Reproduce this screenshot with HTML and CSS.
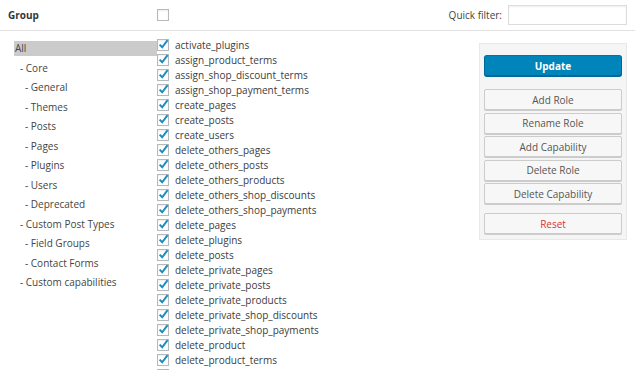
FILE: index.html
```html
<!DOCTYPE html>
<html lang="en">
  <head>
    <meta charset="UTF-8" />
    <meta name="viewport" content="width=device-width, initial-scale=1.0" />
    <title>Capabilities</title>
    <link rel="stylesheet" href="styles.css">
  </head>
  <body>
    <div class="header">
      <div class="group-title">Group</div>
      <span class="cb"></span>
      <div class="filter">
        <label for="quickFilter">Quick filter:</label>
        <input type="text" id="quickFilter" />
      </div>
    </div>
    <div class="main">
      <ul class="groups">
        <li class="active">All</li>
        <li class="lvl1">- Core</li>
        <li class="lvl2">- General</li>
        <li class="lvl2">- Themes</li>
        <li class="lvl2">- Posts</li>
        <li class="lvl2">- Pages</li>
        <li class="lvl2">- Plugins</li>
        <li class="lvl2">- Users</li>
        <li class="lvl2">- Deprecated</li>
        <li class="lvl1">- Custom Post Types</li>
        <li class="lvl2">- Field Groups</li>
        <li class="lvl2">- Contact Forms</li>
        <li class="lvl1">- Custom capabilities</li>
      </ul>
      <ul class="caps" id="caps"></ul>
      <div class="panel">
        <button type="button" class="btn primary">Update</button>
        <div class="btn-group">
          <button type="button" class="btn">Add Role</button>
          <button type="button" class="btn">Rename Role</button>
          <button type="button" class="btn">Add Capability</button>
          <button type="button" class="btn">Delete Role</button>
          <button type="button" class="btn">Delete Capability</button>
        </div>
        <button type="button" class="btn danger">Reset</button>
      </div>
    </div>
    <script>
      const caps = [
        "activate_plugins",
        "assign_product_terms",
        "assign_shop_discount_terms",
        "assign_shop_payment_terms",
        "create_pages",
        "create_posts",
        "create_users",
        "delete_others_pages",
        "delete_others_posts",
        "delete_others_products",
        "delete_others_shop_discounts",
        "delete_others_shop_payments",
        "delete_pages",
        "delete_plugins",
        "delete_posts",
        "delete_private_pages",
        "delete_private_posts",
        "delete_private_products",
        "delete_private_shop_discounts",
        "delete_private_shop_payments",
        "delete_product",
        "delete_product_terms",
        "delete_products",
      ];
      const list = document.getElementById("caps");
      const check =
        '<svg viewBox="0 0 12 12" width="12" height="12"><path d="M2.6 5.6 L5.2 8.3 L10.6 1.2" fill="none" stroke="#1e8cbe" stroke-width="2"/></svg>';
      caps.forEach((cap) => {
        const li = document.createElement("li");
        li.innerHTML = '<span class="cb">' + check + "</span>" + cap;
        list.appendChild(li);
      });
    </script>
  </body>
</html>
```

FILE: styles.css
```css
* {
  margin: 0;
  padding: 0;
  box-sizing: border-box;
}
body {
  font-family: "Open Sans", "Noto Sans", sans-serif;
  font-size: 10px;
  color: #444;
  background: #fff;
  overflow: hidden;
}
.header {
  display: flex;
  align-items: center;
  height: 31px;
  padding: 0 8px 1px;
  border-bottom: 1px solid #e1e1e1;
}
.group-title {
  width: 149px;
  font-weight: 700;
  color: #32373c;
}
.cb {
  display: inline-block;
  width: 12px;
  height: 12px;
  border: 1px solid #b4b9be;
  background: #fff;
  box-shadow: inset 0 1px 2px rgba(0, 0, 0, 0.07);
  position: relative;
  flex-shrink: 0;
}
.cb svg {
  position: absolute;
  left: -1px;
  top: -1px;
  overflow: visible;
}
.filter {
  margin-left: auto;
  display: flex;
  align-items: center;
  gap: 6px;
}
.filter label {
  color: #444;
}
.filter input {
  width: 119px;
  height: 20px;
  border: 1px solid #ddd;
  box-shadow: inset 0 1px 2px rgba(0, 0, 0, 0.07);
}
.main {
  display: flex;
  padding: 6px 8px 0;
}
.groups {
  list-style: none;
  width: 149px;
  padding: 4px 0 0 6px;
}
.groups li {
  height: 15px;
  line-height: 15px;
  margin-bottom: 4.5px;
  color: #444;
}
.groups .active {
  background: #cbcbcb;
  padding-left: 1px;
}
.groups .lvl1 {
  padding-left: 6px;
}
.groups .lvl2 {
  padding-left: 11px;
}
.caps {
  list-style: none;
  flex: 1;
}
.caps li {
  display: flex;
  align-items: center;
  height: 15px;
  gap: 6px;
  color: #3c3c3c;
  white-space: nowrap;
}
.panel {
  width: 148px;
  align-self: flex-start;
  margin-top: 6px;
  padding: 11px 4px 5px;
  background: #f5f5f5;
  border: 1px solid #e8e8e8;
  display: flex;
  flex-direction: column;
}
.btn {
  height: 21px;
  width: 100%;
  font-family: inherit;
  font-size: 10px;
  color: #555;
  background: #f7f7f7;
  border: 1px solid #ccc;
  border-radius: 2px;
  box-shadow: 0 1px 0 #ccc;
  cursor: pointer;
}
.primary {
  background: #0085ba;
  border-color: #0073aa #006799 #006799;
  box-shadow: 0 1px 0 #006799;
  color: #fff;
  font-weight: 700;
  border-radius: 3px;
}
.btn-group {
  display: flex;
  flex-direction: column;
  gap: 2.5px;
  margin: 13px 0 9px;
}
.danger {
  color: #dc3232;
}
```
